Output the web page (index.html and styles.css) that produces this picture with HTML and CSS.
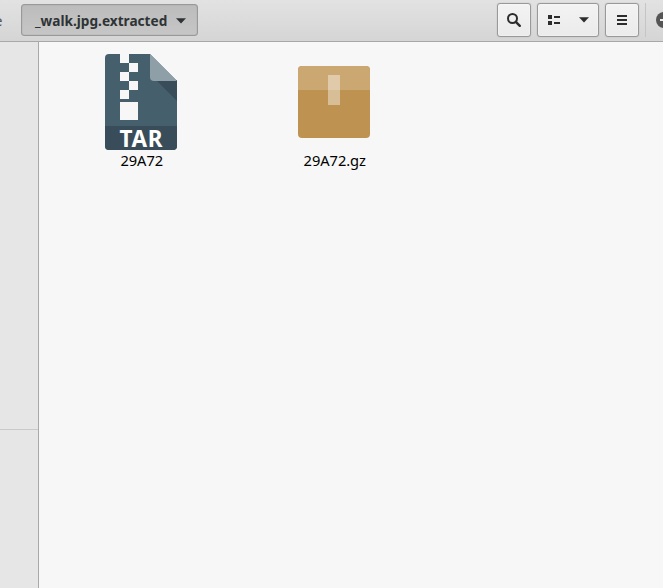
FILE: index.html
```
<!DOCTYPE html>
<html lang="en">
<head>
<meta charset="utf-8">
<title>_walk.jpg.extracted</title>
<link rel="stylesheet" href="styles.css">
</head>
<body>
<div class="window">
  <header class="toolbar">
    <span class="parent">e</span>
    <button class="button path"><span class="path-name">_walk.jpg.extracted</span>
      <svg width="10" height="6" viewBox="0 0 10 6"><path d="M0 .3h10L5 5.5z" fill="#2e3436"/></svg>
    </button>
    <div class="actions">
      <button class="button search" aria-label="Search">
        <svg width="16" height="16" viewBox="0 0 16 16" fill="none" stroke="#2d2d2d"><circle cx="6.5" cy="6.5" r="4.5" stroke-width="2"/><path d="M9.8 9.8l4 4" stroke-width="2.4" stroke-linecap="round"/></svg>
      </button>
      <button class="button view" aria-label="View">
        <svg width="12" height="10" viewBox="0 0 12 10" fill="#2d2d2d"><path d="M0 0h4v4H0zM6 1h6v2H6zM0 6h4v4H0zM6 7h6v2H6z"/></svg>
        <svg width="10" height="6" viewBox="0 0 10 6"><path d="M0 .3h10L5 5.5z" fill="#2d2d2d"/></svg>
      </button>
      <button class="button menu" aria-label="Menu">
        <svg width="10" height="10" viewBox="0 0 10 10" fill="#2d2d2d"><path d="M0 0h10v2H0zM0 4h10v2H0zM0 8h10v2H0z"/></svg>
      </button>
      <span class="separator"></span>
      <svg class="minimize" width="16" height="16" viewBox="0 0 16 16"><circle cx="8" cy="8" r="8" fill="#555"/><path d="M4 7h8v2H4z" fill="#eee"/></svg>
    </div>
  </header>
  <div class="content">
    <aside class="sidebar"><div class="places"></div></aside>
    <main class="files">
      <div class="file">
        <svg width="72" height="96" viewBox="0 0 72 96">
          <path d="M4 0H45L72 27V92a4 4 0 0 1-4 4H4a4 4 0 0 1-4-4V4a4 4 0 0 1 4-4z" fill="#455f6d"/>
          <path d="M51 26h21v21z" fill="#384d59"/>
          <path d="M45 0l27 27H49a4 4 0 0 1-4-4z" fill="#8f9fa7"/>
          <path d="M0 72h72v20a4 4 0 0 1-4 4H4a4 4 0 0 1-4-4z" fill="#384d59"/>
          <path d="M15 0h9v9h-9zM24 9h9v9h-9zM15 18h9v9h-9zM24 27h9v9h-9zM15 36h9v9h-9zM15 48h18v18H15z" fill="#f7f7f7"/>
          <text class="badge" x="14.5" y="93" textLength="43" lengthAdjust="spacing">TAR</text>
        </svg>
        <span class="name">29A72</span>
      </div>
      <div class="file">
        <svg width="72" height="96" viewBox="0 0 72 96">
          <rect y="12" width="72" height="72" rx="4" fill="#be9351"/>
          <path d="M0 36V16a4 4 0 0 1 4-4h64a4 4 0 0 1 4 4v20z" fill="#cba872"/>
          <path d="M30 21h12v15H30z" fill="#e0caa9"/><path d="M30 36h12v15H30z" fill="#d8be96"/>
        </svg>
        <span class="name">29A72.gz</span>
      </div>
    </main>
  </div>
</div>
</body>
</html>
```
FILE: styles.css
```
* { box-sizing: border-box; }
body { margin: 0; overflow: hidden; font-family: "Noto Sans", sans-serif; color: #000; }
.window { width: 663px; height: 588px; display: flex; flex-direction: column; overflow: hidden; }
.toolbar { height: 42px; flex: none; display: flex; align-items: flex-start; padding-top: 3px; background: linear-gradient(#e2e2e2, #d5d5d5); border-bottom: 1px solid #a8a8a8; }
.parent { width: 27px; height: 34px; margin-left: -6px; font-size: 15px; line-height: 34px; color: #555; }
.button { flex: none; height: 34px; padding: 0; display: flex; align-items: center; justify-content: center; border: 1px solid #999; border-radius: 3px; background: linear-gradient(#f3f3f3, #ebebeb); box-shadow: inset 0 0 0 1px #ffffff40, 0 0 1px #999; }
.path { width: 177px; height: 32px; margin-top: 1px; justify-content: flex-start; padding: 0 0 0 13px; gap: 9px; background: linear-gradient(#bcbcbc, #c6c6c6); box-shadow: inset 0 0 1px #888; }
.path-name { width: 132px; font: bold 14.67px/30px "Noto Sans", sans-serif; text-align: left; transform: scaleX(0.93); transform-origin: left; color: #2e3436; white-space: nowrap; }
.path svg { margin-top: 1px; }
.actions { margin-left: auto; display: flex; flex: none; width: 166px; }
.search { width: 34px; }
.view { width: 62px; margin-left: 6px; gap: 19px; }
.menu { width: 34px; margin-left: 6px; }
.separator { flex: none; width: 1px; height: 34px; margin-left: 6px; background: #c5c5c5; }
.minimize { flex: none; margin: 9px 0 0 10px; }
.content { flex: 1; display: flex; }
.sidebar { width: 39px; background: #e6e6e6; border-right: 1px solid #a9a9a9; }
.places { height: 388px; border-bottom: 1px solid #c9c9c9; }
.files { flex: 1; display: flex; align-items: flex-start; gap: 61px; padding: 12px 0 0 36px; background: #f7f7f7; }
.file { width: 132px; display: flex; flex-direction: column; align-items: center; }
.name { font-size: 14.67px; line-height: 20px; letter-spacing: -0.05px; padding-left: 1.5px; }
.badge { font: bold 22.5px "Noto Sans", sans-serif; fill: #fff; }
```
